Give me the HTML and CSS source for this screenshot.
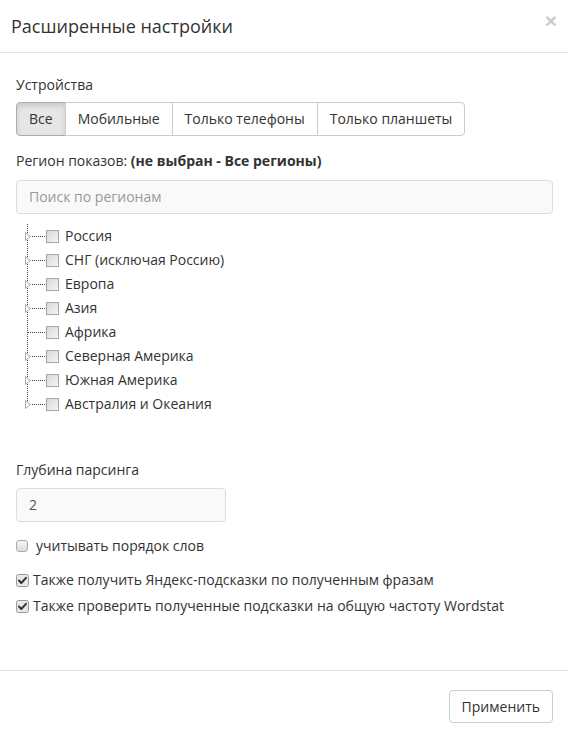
FILE: index.html
```html
<!DOCTYPE html>
<html lang="ru">
<head>
<meta charset="utf-8">
<title>Расширенные настройки</title>
<link rel="stylesheet" href="styles.css">
</head>
<body>
<div class="modal">
  <div class="modal-header">
    <h4 class="title">Расширенные настройки</h4>
    <span class="close">×</span>
  </div>
  <div class="modal-body">
    <div class="label">Устройства</div>
    <div class="btn-group">
      <button class="btn active">Все</button>
      <button class="btn">Мобильные</button>
      <button class="btn">Только телефоны</button>
      <button class="btn">Только планшеты</button>
    </div>
    <div class="label region">Регион показов: <b>(не выбран - Все регионы)</b></div>
    <div class="form-control search"><span class="placeholder">Поиск по регионам</span></div>
    <ul class="tree">
      <li><svg class="branch" width="30" height="24" viewBox="0 0 30 24"><line class="dot" x1="11.5" y1="0" x2="11.5" y2="24"/><line class="dot" x1="14" y1="12.5" x2="29" y2="12.5"/><polygon class="tri" points="9.5,8.5 14.5,12.5 9.5,16.5"/></svg><span class="cb"></span><span class="name">Россия</span></li>
      <li><svg class="branch" width="30" height="24" viewBox="0 0 30 24"><line class="dot" x1="11.5" y1="0" x2="11.5" y2="24"/><line class="dot" x1="14" y1="12.5" x2="29" y2="12.5"/><polygon class="tri" points="9.5,8.5 14.5,12.5 9.5,16.5"/></svg><span class="cb"></span><span class="name">СНГ (исключая Россию)</span></li>
      <li><svg class="branch" width="30" height="24" viewBox="0 0 30 24"><line class="dot" x1="11.5" y1="0" x2="11.5" y2="24"/><line class="dot" x1="14" y1="12.5" x2="29" y2="12.5"/><polygon class="tri" points="9.5,8.5 14.5,12.5 9.5,16.5"/></svg><span class="cb"></span><span class="name">Европа</span></li>
      <li><svg class="branch" width="30" height="24" viewBox="0 0 30 24"><line class="dot" x1="11.5" y1="0" x2="11.5" y2="24"/><line class="dot" x1="14" y1="12.5" x2="29" y2="12.5"/><polygon class="tri" points="9.5,8.5 14.5,12.5 9.5,16.5"/></svg><span class="cb"></span><span class="name">Азия</span></li>
      <li><svg class="branch" width="30" height="24" viewBox="0 0 30 24"><line class="dot" x1="11.5" y1="0" x2="11.5" y2="24"/><line class="dot" x1="12" y1="12.5" x2="29" y2="12.5"/></svg><span class="cb"></span><span class="name">Африка</span></li>
      <li><svg class="branch" width="30" height="24" viewBox="0 0 30 24"><line class="dot" x1="11.5" y1="0" x2="11.5" y2="24"/><line class="dot" x1="14" y1="12.5" x2="29" y2="12.5"/><polygon class="tri" points="9.5,8.5 14.5,12.5 9.5,16.5"/></svg><span class="cb"></span><span class="name">Северная Америка</span></li>
      <li><svg class="branch" width="30" height="24" viewBox="0 0 30 24"><line class="dot" x1="11.5" y1="0" x2="11.5" y2="24"/><line class="dot" x1="14" y1="12.5" x2="29" y2="12.5"/><polygon class="tri" points="9.5,8.5 14.5,12.5 9.5,16.5"/></svg><span class="cb"></span><span class="name">Южная Америка</span></li>
      <li><svg class="branch" width="30" height="24" viewBox="0 0 30 24"><line class="dot" x1="11.5" y1="0" x2="11.5" y2="12"/><line class="dot" x1="14" y1="12.5" x2="29" y2="12.5"/><polygon class="tri" points="9.5,8.5 14.5,12.5 9.5,16.5"/></svg><span class="cb"></span><span class="name">Австралия и Океания</span></li>
    </ul>
    <div class="label depth">Глубина парсинга</div>
    <div class="form-control depth-input">2</div>
    <div class="check order"><span class="rcb"></span><span>учитывать порядок слов</span></div>
    <div class="check checked-row first"><svg class="ccb" width="13" height="13" viewBox="0 0 13 13"><rect x="0.5" y="0.5" width="12" height="12" rx="2" class="ccb-box"/><path d="M3 6.5 L5.3 9 L10 3.8" class="ccb-mark"/></svg><span>Также получить Яндекс-подсказки по полученным фразам</span></div>
    <div class="check checked-row"><svg class="ccb" width="13" height="13" viewBox="0 0 13 13"><rect x="0.5" y="0.5" width="12" height="12" rx="2" class="ccb-box"/><path d="M3 6.5 L5.3 9 L10 3.8" class="ccb-mark"/></svg><span>Также проверить полученные подсказки на общую частоту Wordstat</span></div>
  </div>
  <div class="modal-footer">
    <button class="btn">Применить</button>
  </div>
</div>
</body>
</html>
```

FILE: styles.css
```css
* { box-sizing: border-box; }
html, body {
  margin: 0;
  padding: 0;
  background: #fff;
}
body {
  font-family: "Open Sans", "Liberation Sans", sans-serif;
  font-size: 14px;
  line-height: 20px;
  color: #333;
}
.modal {
  width: 568px;
  height: 739px;
  display: flex;
  flex-direction: column;
}
.modal-header {
  height: 53px;
  border-bottom: 1px solid #e5e5e5;
  display: flex;
  align-items: center;
  justify-content: space-between;
  padding: 0 11px 0 11px;
}
.title {
  margin: 0;
  font-size: 18px;
  font-weight: 400;
  line-height: 24px;
  color: #333;
}
.close {
  font-size: 21px;
  font-weight: 700;
  color: #000;
  opacity: 0.2;
  line-height: 1;
  margin-top: -12px;
  font-family: "Liberation Sans", sans-serif;
}
.modal-body {
  flex: 1;
  padding: 22px 15px 0 16px;
  display: flex;
  flex-direction: column;
  align-items: flex-start;
}
.label { line-height: 20px; }
.btn-group {
  display: flex;
  margin-top: 7px;
}
.btn {
  font-family: inherit;
  font-size: 14px;
  line-height: 20px;
  color: #333;
  background: #fff;
  border: 1px solid #ccc;
  padding: 6px 12px;
  height: 34px;
  margin: 0;
}
.btn-group .btn { border-radius: 0; margin-left: -1px; }
.btn-group .btn:first-child { border-radius: 4px 0 0 4px; margin-left: 0; }
.btn-group .btn:last-child { border-radius: 0 4px 4px 0; }
.btn.active {
  background: #e6e6e6;
  border-color: #adadad;
  box-shadow: inset 0 3px 5px rgba(0,0,0,0.125);
}
.region { margin-top: 15px; }
.form-control {
  height: 34px;
  border: 1px solid #ddd;
  border-radius: 4px;
  background: #f9f9f9;
  padding: 6px 12px;
  line-height: 20px;
  color: #555;
}
.search {
  align-self: stretch;
  margin-top: 9px;
}
.placeholder { color: #999; }
.tree {
  list-style: none;
  margin: 10px 0 0 0;
  padding: 0;
}
.tree li {
  display: flex;
  align-items: center;
  height: 24px;
}
.branch { display: block; flex: none; }
.dot {
  stroke: #444;
  stroke-width: 1;
  stroke-dasharray: 1 1;
}
.tri {
  fill: #fff;
  stroke: #aaa;
  stroke-width: 1;
}
.cb {
  width: 13px;
  height: 13px;
  margin-left: 0;
  border: 1px solid #a5a5a5;
  background: linear-gradient(135deg, #d8d8d8 0%, #eaeaea 60%, #f4f4f4 100%);
  flex: none;
}
.name { margin-left: 6px; }
.depth { margin-top: 44px; }
.depth-input {
  width: 210px;
  margin-top: 8px;
}
.check {
  display: flex;
  align-items: center;
  line-height: 20px;
}
.order { margin-top: 14px; }
.rcb {
  width: 12px;
  height: 12px;
  border: 1px solid #aaa;
  border-radius: 3px;
  background: linear-gradient(#f4f4f4, #dcdcdc);
  margin-right: 8px;
  flex: none;
}
.checked-row { margin-top: 6px; }
.checked-row.first { margin-top: 14px; }
.ccb { flex: none; margin-right: 4px; display: block; }
.ccb-box { fill: #e8e8e8; stroke: #999; stroke-width: 1; }
.ccb-mark { fill: none; stroke: #333; stroke-width: 2; stroke-linecap: round; stroke-linejoin: round; }
.modal-footer {
  border-top: 1px solid #e5e5e5;
  height: 69px;
  display: flex;
  align-items: flex-start;
  justify-content: flex-end;
  padding: 19px 15px 0 0;
}
.modal-footer .btn {
  border-radius: 4px;
  height: 33px;
}
```
